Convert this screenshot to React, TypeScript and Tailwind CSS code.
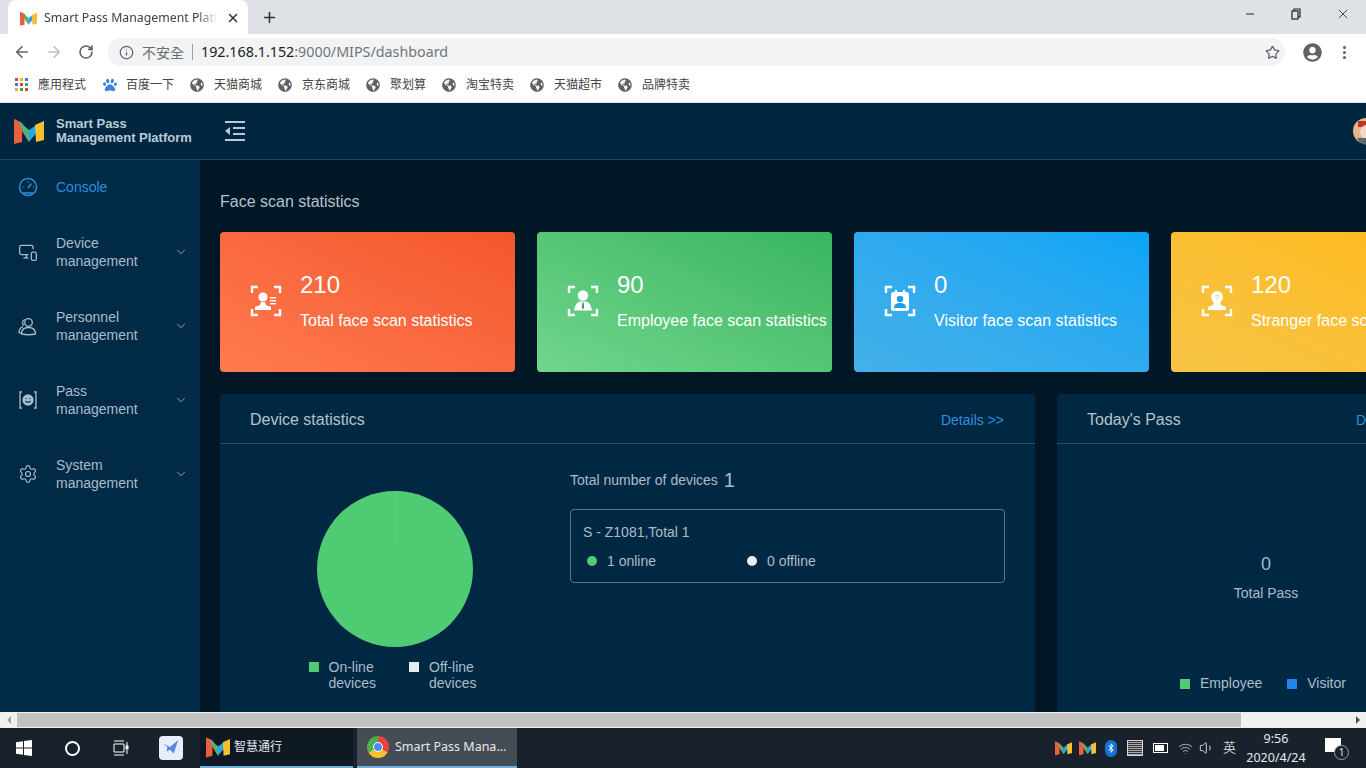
import { MonitorSmartphone, Settings, ChevronDown, ArrowLeft, ArrowRight, RotateCw, Info, Star, X, Plus, Minus, MoreVertical, Wifi, Volume1 } from "lucide-react";
import { FaGlobeAmericas, FaPaw, FaBluetoothB, FaUserCircle } from "react-icons/fa";

const Logo = ({ className }: { className: string }) => (
  <svg viewBox="0 0 30 26" className={className}>
    <path d="M0 1 L8 5 L8 24 L0 26 Z" fill="#e8603c" />
    <path d="M0 1 L8 5 L15 14 L15 24 Z" fill="#e8603c" />
    <path d="M4 3 L15 12 L15 24 Z" fill="#43b97f" />
    <path d="M15 12 L24 6 L24 13 L15 24 Z" fill="#2aa4e8" />
    <path d="M21 7 L30 3 L30 22 L22 24 Z" fill="#f5c02e" />
  </svg>
);

const Corners = () => (
  <g fill="none" stroke="#fff" strokeWidth="2.4">
    <path d="M2 8 V2 H8" />
    <path d="M24 2 H30 V8" />
    <path d="M2 24 V30 H8" />
    <path d="M24 30 H30 V24" />
  </g>
);

const FaceIcon = ({ kind }: { kind: string }) => (
  <svg viewBox="0 0 32 32" className="w-8 h-8 shrink-0">
    <Corners />
    {kind === "total" && (
      <g fill="#fff">
        <circle cx="13" cy="12" r="4.6" />
        <path d="M11 17 h4 l1 3 l5 2 v3 H5 v-3 l5-2 z" />
        <rect x="20" y="12" width="6" height="1.4" />
        <rect x="20" y="15" width="6" height="1.4" />
        <rect x="20" y="18" width="6" height="1.4" />
      </g>
    )}
    {kind === "employee" && (
      <g fill="#fff">
        <circle cx="16" cy="10.5" r="5.2" />
        <path d="M12.5 16.5 h7 q4 1 5.5 9 H7 q1.500-8 5.500-9 z" />
        <path d="M15.4 17.500 h1.200 l.5 5 l-1.100 2 l-1.100-2 z" fill="#3a8f58" />
      </g>
    )}
    {kind === "visitor" && (
      <g>
        <rect x="7" y="7" width="18" height="19" rx="2.5" fill="#fff" />
        <rect x="11" y="5" width="2" height="4" fill="#fff" />
        <rect x="19" y="5" width="2" height="4" fill="#fff" />
        <circle cx="16" cy="14" r="3.2" fill="#1f9fe6" />
        <path d="M10 23 c0-4 3-5 6-5 s6 1 6 5 z" fill="#1f9fe6" />
      </g>
    )}
    {kind === "stranger" && (
      <g>
        <circle cx="16" cy="12" r="6" fill="#fff" />
        <path d="M13 17 h6 l1 3 l5 2 v3 H7 v-3 l5-2 z" fill="#fff" />
        <text x="16" y="15" textAnchor="middle" fontSize="8" fill="#f5b82c" fontFamily="Liberation Sans, sans-serif">?</text>
      </g>
    )}
  </svg>
);

const ConsoleIcon = () => (
  <svg viewBox="0 0 20 20" className="w-[20px] h-[20px]" fill="none" stroke="currentColor" strokeWidth="1.5">
    <circle cx="10" cy="10" r="8.500" />
    <path d="M5 16 H15" />
    <path d="M10 11 L13.500 6.500" />
    <path d="M4.500 10 H5.500 M10 4.500 V5.500 M15 10 H16" />
  </svg>
);

const PeopleIcon = () => (
  <svg viewBox="0 0 20 20" className="w-[20px] h-[20px]" fill="none" stroke="currentColor" strokeWidth="1.3">
    <circle cx="10.500" cy="6.500" r="3.800" />
    <path d="M3.500 18 c0-4.500 3-6.500 7-6.500 s7 2 7 6.500 q-7 1.500 -14 0 z" />
    <path d="M6.800 3.500 a3.500 3.500 0 0 0 -1 6 M5 10.500 c-2.500 1-4 3-4 6 l2.500 1" />
  </svg>
);

const PassIcon = () => (
  <svg viewBox="0 0 20 20" className="w-[20px] h-[20px]" fill="none" stroke="currentColor" strokeWidth="1.300">
    <path d="M4 2 H2 V18 H4" />
    <path d="M16 2 H18 V18 H16" />
    <circle cx="10" cy="10" r="5" fill="currentColor" />
    <path d="M7.500 11 c1 1.600 4 1.600 5 0" stroke="#002a46" />
    <circle cx="8" cy="8.600" r=".7" fill="#002a46" stroke="none" />
    <circle cx="12" cy="8.600" r=".7" fill="#002a46" stroke="none" />
  </svg>
);

const bookmarks = ["天猫商城", "京东商城", "聚划算", "淘宝特卖", "天猫超市", "品牌特卖"];

const cards = [
  { kind: "total", value: "210", label: "Total face scan statistics", bg: "bg-linear-to-tr from-[#ff7a50] to-[#f4562a]" },
  { kind: "employee", value: "90", label: "Employee face scan statistics", bg: "bg-linear-to-tr from-[#6fd68c] to-[#38b55f]" },
  { kind: "visitor", value: "0", label: "Visitor face scan statistics", bg: "bg-linear-to-tr from-[#44b0e8] to-[#08a4f6]" },
  { kind: "stranger", value: "120", label: "Stranger face scan statistics", bg: "bg-linear-to-tr from-[#f6c445] to-[#ffb912]" },
];

const menu = [
  { a: "Device", b: "management", icon: <MonitorSmartphone className="w-[20px] h-[20px]" strokeWidth={1.5} /> },
  { a: "Personnel", b: "management", icon: <PeopleIcon /> },
  { a: "Pass", b: "management", icon: <PassIcon /> },
  { a: "System", b: "management", icon: <Settings className="w-[20px] h-[20px]" strokeWidth={1.4} /> },
];

const BrowserChrome = () => (
  <div className="shrink-0 font-['Noto_Sans','Noto_Sans_CJK_TC',sans-serif]">
    <div className="h-[34px] bg-[#dee1e6] flex items-end pl-2 text-[#3c4043]">
      <div className="w-[240px] h-[34px] bg-white rounded-t-lg flex items-center pl-[12px] pr-[8px] pt-[2px]">
        <Logo className="w-[17px] h-[15px] shrink-0" />
        <span className="ml-[7px] w-[174px] overflow-hidden whitespace-nowrap text-[12.3px] [mask-image:linear-gradient(90deg,#000_88%,transparent)]">Smart Pass Management Platform</span>
        <X className="w-[14px] h-[14px] ml-auto text-[#333]" strokeWidth={2.5} />
      </div>
      <Plus className="w-[17px] h-[17px] ml-[13px] mb-[8px] text-[#333]" strokeWidth={2.2} />
      <div className="ml-auto flex items-center h-[34px] pb-[6px] text-[#222]">
        <Minus className="w-[12px] h-[12px] mr-[34px]" />
        <svg viewBox="0 0 12 12" className="w-[12px] h-[12px] mr-[33px]" fill="none" stroke="#222" strokeWidth="1.2">
          <rect x="2" y="3" width="6" height="8" />
          <path d="M4 3 V1 H10 V9 H8" />
        </svg>
        <X className="w-[16px] h-[16px] mr-[15px]" strokeWidth={1.2} />
      </div>
    </div>
    <div className="h-[34px] bg-white flex items-center pl-[13px] pr-[10px] pt-[2px]">
      <ArrowLeft className="w-[18px] h-[18px] text-[#5f6368]" strokeWidth={2.2} />
      <ArrowRight className="w-[18px] h-[18px] ml-[14px] text-[#bdc1c6]" strokeWidth={2.2} />
      <RotateCw className="w-[16px] h-[16px] ml-[15px] text-[#5f6368]" strokeWidth={2.4} />
      <div className="ml-[14px] w-[1177px] h-[28px] rounded-full bg-[#f1f3f4] flex items-center pl-[11px] pr-[5px]">
        <Info className="w-[15px] h-[15px] text-[#5f6368]" strokeWidth={2} />
        <span className="ml-[8px] text-[14px] text-[#6a6d70]">不安全</span>
        <span className="ml-[8px] w-px h-[16px] bg-[#9aa0a6]" />
        <span className="ml-[8px] text-[14.3px] text-[#202124] whitespace-nowrap">
          192.168.1.152<span className="text-[#70757a]">:9000/MIPS/dashboard</span>
        </span>
        <Star className="w-[15px] h-[15px] ml-auto text-[#5f6368]" strokeWidth={2} />
      </div>
      <FaUserCircle className="w-[19px] h-[19px] ml-[18px] text-[#5f6368]" />
      <MoreVertical className="w-[17px] h-[17px] ml-[14px] text-[#5f6368]" strokeWidth={2.4} />
    </div>
    <div className="h-[35px] bg-white border-b border-[#cfe6f3] flex items-center pl-[15px] pb-[1px] text-[12px] text-[#444]">
      <div className="grid grid-cols-3 gap-[2px] w-[13px] h-[13px]">
        <i className="bg-[#d9473c]" /><i className="bg-[#f3b41b]" /><i className="bg-[#3b7de8]" />
        <i className="bg-[#3b7de8]" /><i className="bg-[#d9473c]" /><i className="bg-[#3aa757]" />
        <i className="bg-[#f3b41b]" /><i className="bg-[#3aa757]" /><i className="bg-[#d9473c]" />
      </div>
      <span className="ml-[10px]">應用程式</span>
      <FaPaw className="w-[14px] h-[14px] ml-[17px] text-[#3f83d8]" />
      <span className="ml-[9px]">百度一下</span>
      {bookmarks.map((b) => (
        <div key={b} className="flex items-center ml-[16px]">
          <FaGlobeAmericas className="w-[14px] h-[14px] text-[#5f6368]" />
          <span className="ml-[10px]">{b}</span>
        </div>
      ))}
    </div>
  </div>
);

const Sidebar = () => (
  <div className="w-[200px] shrink-0 bg-[#002a46] text-[#a9bdca] text-[14px] leading-[18px]">
    <div className="h-[55px] flex items-center pl-[18px] pb-[2px] text-[#2b8fe0]">
      <ConsoleIcon />
      <span className="ml-[18px]">Console</span>
    </div>
    {menu.map((m) => (
      <div key={m.a} className="h-[74px] flex items-center pl-[18px] pr-[12px]">
        {m.icon}
        <div className="ml-[18px]">
          <div>{m.a}</div>
          <div>{m.b}</div>
        </div>
        <ChevronDown className="w-[14px] h-[14px] ml-auto" strokeWidth={1.4} />
      </div>
    ))}
  </div>
);

const Panel = ({ title, width, pr, children }: { title: string; width: string; pr: string; children: React.ReactNode }) => (
  <div className={`${width} shrink-0 bg-[#012842] rounded-t-sm`}>
    <div className={`h-[50px] border-b border-[#2a4d66] flex items-center justify-between pl-[30px] ${pr}`}>
      <span className="text-[16px] pt-[2px] text-[#b3c4d0]">{title}</span>
      <span className="text-[14px] pt-[4px] text-[#2b8fe0]">Details &gt;&gt;</span>
    </div>
    {children}
  </div>
);

const Legend = ({ color, a, b }: { color: string; a: string; b: string }) => (
  <div className="flex items-start">
    <span className={`w-[10px] h-[10px] mt-[3px] ${color}`} />
    <div className="ml-[10px] leading-[16px]">
      <div>{a}</div>
      <div>{b}</div>
    </div>
  </div>
);

const Dashboard = () => (
  <div className="flex-1 overflow-hidden bg-[#011725] px-[20px]">
    <div className="mt-[30px] h-[24px] leading-[24px] text-[16px] text-[#b3c4d0]">Face scan statistics</div>
    <div className="mt-[18px] flex gap-[22px]">
      {cards.map((c) => (
        <div key={c.kind} className={`w-[295px] h-[140px] shrink-0 rounded-sm overflow-hidden flex items-center pl-[30px] text-white ${c.bg}`}>
          <div className="mb-[2px]">
            <FaceIcon kind={c.kind} />
          </div>
          <div className="ml-[18px] mb-[3px] whitespace-nowrap">
            <div className="text-[24px] leading-[32px]">{c.value}</div>
            <div className="mt-[8px] text-[16px] leading-[24px]">{c.label}</div>
          </div>
        </div>
      ))}
    </div>
    <div className="mt-[22px] flex gap-[22px] text-[14px] text-[#a9bdca]">
      <Panel title="Device statistics" width="w-[815px]" pr="pr-[31px]">
        <div className="flex pt-[26px] h-[300px]">
          <div className="w-[350px] shrink-0 flex flex-col items-center">
            <svg viewBox="0 0 156 156" className="w-[156px] h-[156px] mt-[21px]">
              <circle cx="78" cy="78" r="78" fill="#4ecb73" />
              <path d="M78 0 V54" stroke="#5dd180" strokeWidth="1" />
            </svg>
            <div className="mt-[12px] flex gap-[33px] mr-[5px]">
              <Legend color="bg-[#4ecb73]" a="On-line" b="devices" />
              <Legend color="bg-[#e8ebf0]" a="Off-line" b="devices" />
            </div>
          </div>
          <div className="w-[435px] shrink-0">
            <div className="flex items-center h-[22px] -mt-[1px]">
              <span className="mt-[1px]">Total number of devices</span>
              <span className="ml-[6px] text-[20px]">1</span>
            </div>
            <div className="mt-[18px] h-[74px] border border-[#5a7689] rounded-sm px-[12px] pt-[12px]">
              <div className="leading-[20px]">S - Z1081,Total 1</div>
              <div className="mt-[9px] flex items-center leading-[20px]">
                <div className="w-[160px] flex items-center pl-[4px]">
                  <span className="w-[10px] h-[10px] rounded-full bg-[#4ecb73]" />
                  <span className="ml-[10px]">1 online</span>
                </div>
                <div className="flex items-center pl-[4px]">
                  <span className="w-[10px] h-[10px] rounded-full bg-[#e8ebf0]" />
                  <span className="ml-[10px]">0 offline</span>
                </div>
              </div>
            </div>
          </div>
        </div>
      </Panel>
      <Panel title="Today's Pass" width="w-[409px]" pr="pr-[47px]">
        <div className="flex flex-col items-center pt-[108px] pl-[9px]">
          <div className="text-[18px] leading-[24px]">0</div>
          <div className="mt-[7px] leading-[20px]">Total Pass</div>
          <div className="mt-[70px] flex gap-[25px] self-start ml-[114px]">
            <div className="flex items-center">
              <span className="w-[10px] h-[10px] bg-[#4ecb73]" />
              <span className="ml-[10px]">Employee</span>
            </div>
            <div className="flex items-center">
              <span className="w-[10px] h-[10px] bg-[#1f86e8]" />
              <span className="ml-[10px]">Visitor</span>
            </div>
          </div>
        </div>
      </Panel>
    </div>
  </div>
);

const AppHeader = () => (
  <div className="h-[57px] shrink-0 bg-[#002640] border-b border-[#24475e] flex items-center pl-[14px] pr-[106px]">
    <Logo className="w-[30px] h-[26px] shrink-0" />
    <div className="ml-[12px] text-[13px] leading-[14px] font-bold text-[#b9cbd8] whitespace-nowrap">
      <div>Smart Pass</div>
      <div>Management Platform</div>
    </div>
    <svg viewBox="0 0 20 20" className="w-[20px] h-[20px] ml-[33px]" fill="#b9cbd8">
      <rect x="0" y="0" width="20" height="2" />
      <rect x="8" y="6" width="12" height="2" />
      <rect x="8" y="12" width="12" height="2" />
      <rect x="0" y="18" width="20" height="2" />
      <path d="M5 6 V14 L0 10 Z" />
    </svg>
    <svg viewBox="0 0 28 28" className="w-[28px] h-[28px] ml-auto">
      <circle cx="14" cy="14" r="13" fill="#e8b48a" />
      <path d="M6 4 H24 V10 H6 Z" fill="#b83a26" />
      <circle cx="15" cy="15" r="7" fill="#f6d7c8" />
      <path d="M5 21 H25 V25 L14 28 L7 25 Z" fill="#5c6a72" />
    </svg>
  </div>
);

const Scrollbar = () => (
  <div className="h-[16px] shrink-0 bg-[#f1f1f1] flex items-center">
    <div className="w-[17px] flex justify-center">
      <span className="border-y-[4px] border-y-transparent border-r-[4px] border-r-[#a3a3a3]" />
    </div>
    <div className="w-[1224px] h-[14px] bg-[#c1c1c1]" />
    <div className="ml-auto w-[16px] flex justify-center">
      <span className="border-y-[4px] border-y-transparent border-l-[4px] border-l-[#505050]" />
    </div>
  </div>
);

const Taskbar = () => (
  <div className="h-[40px] shrink-0 bg-[#19222c] flex items-center text-[#e6e9ec] font-['Noto_Sans','Noto_Sans_CJK_SC',sans-serif]">
    <svg viewBox="0 0 16 16" className="w-[16px] h-[16px] ml-[16px]" fill="#fff">
      <path d="M0 2.3 L7 1.2 V7.6 H0 Z M8 1 L16 0 V7.6 H8 Z M0 8.5 H7 V14.8 L0 13.7 Z M8 8.5 H16 V16 L8 15 Z" />
    </svg>
    <span className="ml-[33px] w-[15px] h-[15px] rounded-full border-2 border-white" />
    <svg viewBox="0 0 16 16" className="w-[16px] h-[16px] ml-[33px]" fill="none" stroke="#fff" strokeWidth="1">
      <path d="M1 1 H11 M1 15 H11 M1 4 H11 V12 H1 Z M14 2 V6 M14 10 V14" />
      <rect x="13" y="6" width="2" height="3" fill="#fff" />
    </svg>
    <div className="ml-[30px] w-[24px] h-[24px] rounded-[4px] bg-[#e8edfb] flex items-center justify-center">
      <svg viewBox="0 0 20 20" className="w-[18px] h-[18px]">
        <path d="M1 5 L9 9 L18 1 L13 16 L9 12 L5 14 L6 9 Z" fill="#5b84e6" />
      </svg>
    </div>
    <div className="ml-[17px] w-[153px] h-full bg-[#0f1923] border-b-2 border-[#6fb0dc] flex items-center pl-[6px]">
      <Logo className="w-[24px] h-[22px]" />
      <span className="ml-[4px] text-[12px]">智慧通行</span>
    </div>
    <div className="ml-[4px] w-[160px] h-full bg-[#444c55] border-b-2 border-[#6fb0dc] flex items-center pl-[10px]">
      <span className="w-[22px] h-[22px] rounded-full bg-[conic-gradient(#e8453c_0_33%,#fbc02d_33%_66%,#4caf50_66%_100%)] flex items-center justify-center">
        <span className="w-[10px] h-[10px] rounded-full bg-[#4b8bf5] border border-white" />
      </span>
      <span className="ml-[6px] text-[12.5px] whitespace-nowrap">Smart Pass Mana...</span>
    </div>
    <div className="ml-auto flex items-center pr-[25px]">
      <Logo className="w-[17px] h-[16px]" />
      <Logo className="w-[17px] h-[16px] ml-[7px]" />
      <span className="ml-[9px] w-[12px] h-[17px] rounded-full bg-[#1273d6] flex items-center justify-center">
        <FaBluetoothB className="w-[10px] h-[10px] text-white" />
      </span>
      <span className="ml-[10px] w-[16px] h-[16px] border border-[#d5d8da] bg-[repeating-linear-gradient(0deg,#aaa_0_1px,#333_1px_2px)]" />
      <span className="ml-[10px] w-[15px] h-[10px] border border-white p-[1px]">
        <span className="block w-[9px] h-full bg-white" />
      </span>
      <Wifi className="w-[15px] h-[15px] ml-[10px] text-[#c9cdd0]" strokeWidth={1.3} />
      <Volume1 className="w-[16px] h-[16px] ml-[6px] text-[#e6e9ec]" strokeWidth={1.3} />
      <span className="ml-[8px] text-[13px] text-[#c9cdd0]">英</span>
      <div className="ml-[9px] w-[62px] text-center text-[12.5px] leading-[19px]">
        <div>9:56</div>
        <div>2020/4/24</div>
      </div>
      <div className="relative ml-[18px] w-[16px] h-[14px] bg-white mb-[6px]">
        <span className="absolute -right-[8px] -bottom-[8px] w-[15px] h-[15px] rounded-full border border-[#9aa0a6] bg-[#19222c] text-[10px] leading-[13px] text-center">1</span>
      </div>
    </div>
  </div>
);

export default function App() {
  return (
    <div className="w-[1366px] h-[768px] flex flex-col overflow-hidden font-['Liberation_Sans',sans-serif]">
      <BrowserChrome />
      <div className="flex-1 min-h-0 overflow-hidden">
        <div className="w-[1486px] h-full flex flex-col">
          <AppHeader />
          <div className="flex-1 min-h-0 flex">
            <Sidebar />
            <Dashboard />
          </div>
        </div>
      </div>
      <Scrollbar />
      <Taskbar />
    </div>
  );
}
